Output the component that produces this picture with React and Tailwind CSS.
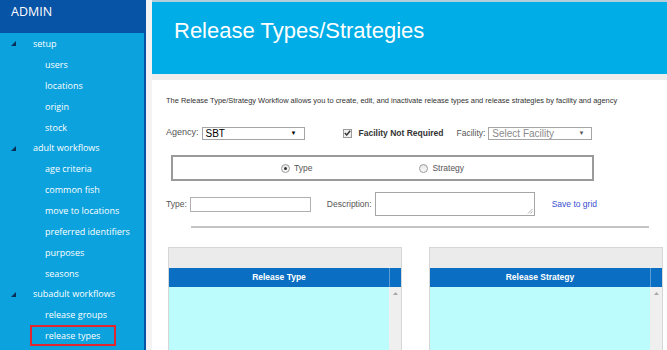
import React from "react";

const navItems = [
  { label: "setup", level: 1 },
  { label: "users", level: 2 },
  { label: "locations", level: 2 },
  { label: "origin", level: 2 },
  { label: "stock", level: 2 },
  { label: "adult workflows", level: 1 },
  { label: "age criteria", level: 2 },
  { label: "common fish", level: 2 },
  { label: "move to locations", level: 2 },
  { label: "preferred identifiers", level: 2 },
  { label: "purposes", level: 2 },
  { label: "seasons", level: 2 },
  { label: "subadult workflows", level: 1 },
  { label: "release groups", level: 2 },
  { label: "release types", level: 2, active: true },
];

function Arrow() {
  return (
    <svg width="5" height="5" viewBox="0 0 5 5" className="block">
      <polygon points="5,0 5,5 0,5" fill="#0b2f55" />
    </svg>
  );
}

function Radio({ checked }) {
  return (
    <span className="w-[9px] h-[9px] rounded-full border border-[#9a9a9a] bg-gradient-to-b from-[#e8e8e8] to-[#fafafa] flex items-center justify-center">
      {checked && <span className="w-[3px] h-[3px] rounded-full bg-[#333]" />}
    </span>
  );
}

function Grid({ title }) {
  return (
    <div className="w-[234px] h-[110px] shrink-0 border border-[#d6d6d6] flex flex-col">
      <div className="h-[20px] shrink-0 bg-[#ebebeb]" />
      <div className="h-[19px] shrink-0 bg-[#0a6fc2] flex">
        <div className="flex-1 flex items-center justify-center text-white font-bold text-[8.5px] font-['Liberation_Sans',sans-serif]">
          {title}
        </div>
        <div className="w-px bg-[#5d9bd6]" />
        <div className="w-[11px]" />
      </div>
      <div className="flex-1 flex">
        <div className="flex-1 bg-[#bdfcfc]" />
        <div className="w-[12px] bg-[#efefef] flex justify-center pt-[5px]">
          <svg width="5" height="3" viewBox="0 0 5 3" className="block">
            <polygon points="2.5,0 5,3 0,3" fill="#a8a8a8" />
          </svg>
        </div>
      </div>
    </div>
  );
}

export default function App() {
  return (
    <div className="w-[667px] h-[350px] overflow-hidden flex bg-[#f2f2f2] font-['Liberation_Sans',sans-serif]">
      {/* Sidebar */}
      <aside className="w-[146px] shrink-0 bg-[#0ba2dd] border-r-2 border-[#0753a6] flex flex-col font-['Open_Sans',sans-serif]">
        <div className="h-[33px] shrink-0 bg-[#0753a6] pl-[11px] pt-[4px] text-white text-[12.5px] leading-[16px]">
          ADMIN
        </div>
        <div className="pt-[0.5px]">
          {navItems.map((it) =>
            it.active ? (
              <div key={it.label} className="h-[20.86px] flex items-center pl-[30px]">
                <span className="h-[21px] border-2 border-[#e2262d] pl-[13px] pr-[14px] flex items-center text-white text-[9px] font-medium">
                  {it.label}
                </span>
              </div>
            ) : it.level === 1 ? (
              <div key={it.label} className="h-[20.86px] flex items-center text-white text-[9px] font-medium">
                <span className="w-[33px] pl-[11px] flex items-center">
                  <Arrow />
                </span>
                {it.label}
              </div>
            ) : (
              <div key={it.label} className="h-[20.86px] flex items-center pl-[45px] text-white text-[9px] font-medium">
                {it.label}
              </div>
            )
          )}
        </div>
      </aside>

      <div className="w-[6px] shrink-0 bg-[#f3f3f3]" />

      {/* Main */}
      <main className="flex-1 flex flex-col bg-white min-w-0">
        <div className="h-[2px] shrink-0 bg-[#b3cfdd]" />
        <div className="h-[72px] shrink-0 bg-[#00ade6] pl-[22px] pt-[18px]">
          <h1 className="text-white text-[22px] leading-[22px]">Release Types/Strategies</h1>
        </div>
        <div className="h-[6px] shrink-0 bg-[#ededed]" />

        <div className="pl-[14px] flex flex-col shrink-0">
          <p className="mt-[17px] text-[7.45px] leading-[8px] text-[#333] whitespace-nowrap">
            The Release Type/Strategy Workflow allows you to create, edit, and inactivate release types and release strategies by facility and agency
          </p>

          {/* Agency row */}
          <div className="mt-[21px] h-[14px] flex items-center text-[8.5px] text-[#555]">
            <span className="text-[9px]">Agency:</span>
            <div className="ml-[3px] w-[103px] h-[13px] border border-[#a5a5a5] flex items-center justify-between pl-[3px] pr-[7px] text-[10px] text-black">
              <span>SBT</span>
              <span className="text-[6px]">▼</span>
            </div>
            <span className="ml-[38px] w-[9px] h-[9px] border border-[#9a9a9a] bg-[#f0f0f0] flex items-center justify-center">
              <svg width="7" height="6" viewBox="0 0 7 6" className="block">
                <path d="M0.8 3 L2.7 5 L6.2 0.8" stroke="#333" strokeWidth="1.4" fill="none" />
              </svg>
            </span>
            <span className="ml-[7px] font-bold text-[#333]">Facility Not Required</span>
            <span className="ml-[13px]">Facility:</span>
            <div className="ml-[3px] w-[104px] h-[13px] border border-[#a5a5a5] flex items-center justify-between pl-[3px] pr-[7px] text-[10px] text-[#8a8a8a]">
              <span>Select Facility</span>
              <span className="text-[6px] text-[#555]">▼</span>
            </div>
          </div>

          {/* Radio box */}
          <div className="mt-[15px] ml-[5px] w-[423px] h-[26px] border-2 border-[#9a9a9a] flex items-center text-[8.5px] text-[#555]">
            <div className="ml-[108px] flex items-center gap-[4px]">
              <Radio checked />
              <span>Type</span>
            </div>
            <div className="ml-[107px] flex items-center gap-[4px]">
              <Radio />
              <span>Strategy</span>
            </div>
          </div>

          {/* Type row */}
          <div className="mt-[11px] h-[24px] flex items-center text-[8.5px] text-[#555]">
            <span>Type:</span>
            <div className="ml-[3px] w-[121px] h-[15px] border border-[#b0b0b0]" />
            <span className="ml-[16px]">Description:</span>
            <div className="ml-[3px] w-[160px] h-[24px] border border-[#a5a5a5] relative">
              <svg width="6" height="6" viewBox="0 0 6 6" className="absolute right-[1px] bottom-[1px]">
                <path d="M5.5 1 L1 5.5 M5.5 3.5 L3.5 5.5" stroke="#999" strokeWidth="0.8" />
              </svg>
            </div>
            <span className="ml-[17px] text-[#3a4fcf]">Save to grid</span>
          </div>

          {/* hr */}
          <div className="mt-[10px] ml-[25px] w-[458px] h-[2px] bg-[#c4c4c4]" />

          {/* Grids */}
          <div className="mt-[19px] ml-[2px] flex gap-[27px]">
            <Grid title="Release Type" />
            <Grid title="Release Strategy" />
          </div>
        </div>
      </main>
    </div>
  );
}
